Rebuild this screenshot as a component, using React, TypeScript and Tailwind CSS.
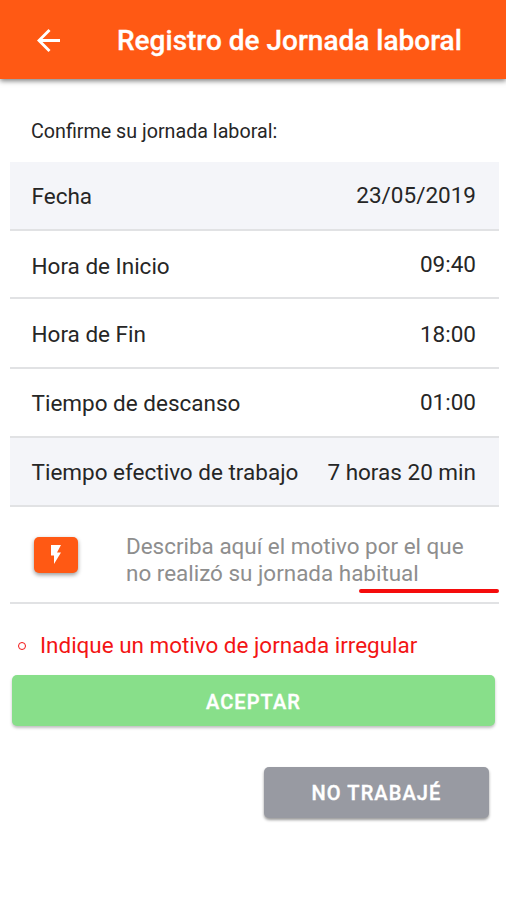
import React from "react";

type Row = { label: string; value: string; shaded?: boolean; height: string; labelPad: string; valuePad: string };

const rows: Row[] = [
  { label: "Fecha", value: "23/05/2019", shaded: true, height: "h-[69px]", labelPad: "pt-[2px]", valuePad: "" },
  { label: "Hora de Inicio", value: "09:40", height: "h-[68px]", labelPad: "pt-[6px]", valuePad: "pt-[2px]" },
  { label: "Hora de Fin", value: "18:00", height: "h-[70px]", labelPad: "pt-[3px]", valuePad: "pt-[4px]" },
  { label: "Tiempo de descanso", value: "01:00", height: "h-[69px]", labelPad: "pt-[3px]", valuePad: "pt-[1px]" },
  {
    label: "Tiempo efectivo de trabajo",
    value: "7 horas 20 min",
    shaded: true,
    height: "h-[69px]",
    labelPad: "pt-[2px]",
    valuePad: "pt-[2px]",
  },
];

export default function App() {
  return (
    <div className="h-[900px] w-full overflow-hidden bg-white font-['Roboto',sans-serif] text-[#262626]">
      <header className="flex h-[79px] items-center bg-[#ff5914] pl-[37px] text-white shadow-[0_2px_5px_rgba(0,0,0,0.5)]">
        <svg className="mt-[2px] h-[23px] w-[23px]" viewBox="4 4 16 16" fill="currentColor">
          <path d="M20 11H7.83l5.59-5.59L12 4l-8 8 8 8 1.41-1.41L7.83 13H20v-2z" />
        </svg>
        <h1 className="ml-[57px] mt-[3px] whitespace-nowrap text-[28px] font-medium [-webkit-text-stroke:0.3px_white]">
          Registro de Jornada laboral
        </h1>
      </header>
      <main className="pl-[10px] pr-[7px]">
        <p className="flex h-[83px] items-center pl-[21px] pt-[23px] text-[19.7px]">Confirme su jornada laboral:</p>
        {rows.map((r) => (
          <div
            key={r.label}
            className={`flex items-center justify-between whitespace-nowrap border-b-2 border-[#e1e2e4] pl-[21.5px] pr-[23px] text-[22.5px] ${r.height} ${r.shaded ? "bg-[#f4f5f9]" : ""}`}
          >
            <span className={r.labelPad}>{r.label}</span>
            <span className={r.valuePad}>{r.value}</span>
          </div>
        ))}
        <div className="relative flex h-[97px] border-b-2 border-[#e1e2e4] pl-6 pt-[30px]">
          <button className="flex h-[36px] w-[44px] items-center justify-center rounded-[5px] bg-[#ff5914] text-white shadow-[0_2px_4px_rgba(0,0,0,0.4)]">
            <svg className="mb-px h-[19px] w-[10px]" viewBox="7 2 10 20" preserveAspectRatio="none" fill="currentColor">
              <path d="M7 2v11h3v9l7-12h-4l4-8z" />
            </svg>
          </button>
          <p className="-mt-1 ml-12 whitespace-nowrap text-[22.45px] leading-[26.5px] text-[#8e8e8e]">
            Describa aquí el motivo por el que
            <br />
            no realizó su jornada habitual
          </p>
          <span className="absolute bottom-[9px] right-0 h-1 w-[140px] rounded-[2px] bg-[#f50c0c]" />
        </div>
        <div className="flex h-[71px] items-center pl-[8px] pt-[12px] text-[#f31414]">
          <span className="h-[8px] w-[8px] rounded-full border border-[#f31414]" />
          <span className="ml-[14px] whitespace-nowrap text-[22.45px]">Indique un motivo de jornada irregular</span>
        </div>
        <button className="ml-[2px] block h-[51px] w-[483px] rounded-[5px] bg-[#88df8a] pt-[2px] text-[20px] font-medium tracking-[1.1px] text-white shadow-[0_2px_3px_rgba(0,0,0,0.25)] [-webkit-text-stroke:0.4px_white]">
          ACEPTAR
        </button>
        <button className="ml-[254px] mt-[41px] block h-[51px] w-[225px] rounded-[5px] bg-[#989aa2] text-[20px] font-medium tracking-[1.1px] text-white shadow-[0_2px_3px_rgba(0,0,0,0.4)] [-webkit-text-stroke:0.4px_white]">
          NO TRABAJÉ
        </button>
      </main>
    </div>
  );
}
